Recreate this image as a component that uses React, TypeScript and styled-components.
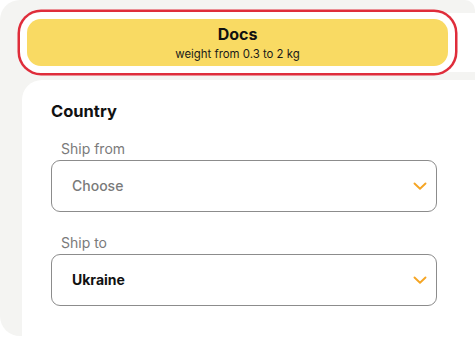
import React from 'react'
import styled, { createGlobalStyle } from 'styled-components'

const GlobalStyle = createGlobalStyle`
  html, body {
    margin: 0;
    padding: 0;
    background: #ffffff;
    overflow: hidden;
  }
  body {
    font-family: Inter, "Noto Sans", "Liberation Sans", sans-serif;
    color: #111111;
  }
`

type Field = { label: string; value: string | null }

const fields: Field[] = [
  { label: 'Ship from', value: null },
  { label: 'Ship to', value: 'Ukraine' },
]

const Chevron = () => (
  <svg width="14" height="9" viewBox="0 0 14 9" fill="none">
    <path d="M1.5 1.5L7 6.8L12.5 1.5" stroke="#f5a524" strokeWidth="1.9" strokeLinecap="round" strokeLinejoin="round" />
  </svg>
)

export default function App() {
  return (
    <>
      <GlobalStyle />
      <Panel>
        <TypeCard>
          <TypeOption>
            <OptionTitle>Docs</OptionTitle>
            <OptionHint>weight from 0.3 to 2 kg</OptionHint>
          </TypeOption>
        </TypeCard>

        <FormCard>
          <SectionTitle>Country</SectionTitle>
          {fields.map((field) => (
            <FieldGroup key={field.label}>
              <FieldLabel>{field.label}</FieldLabel>
              <SelectBox>
                <SelectValue filled={field.value != null}>{field.value ?? 'Choose'}</SelectValue>
                <Chevron />
              </SelectBox>
            </FieldGroup>
          ))}
        </FormCard>
      </Panel>
    </>
  )
}

const Panel = styled.div`
  display: flex;
  flex-direction: column;
  gap: 8px;
  width: 475px;
  height: 336px;
  box-sizing: border-box;
  padding: 13px 0 0 22px;
  background: #f4f4f2;
  border-radius: 20px 10px 0 20px;
  overflow: hidden;
`

const TypeCard = styled.div`
  display: flex;
  align-items: center;
  width: 480px;
  height: 59px;
  box-sizing: border-box;
  padding: 0 0 0 5px;
  background: #ffffff;
  border-radius: 16px 0 0 16px;
  flex-shrink: 0;
`

const TypeOption = styled.div`
  display: flex;
  flex-direction: column;
  align-items: center;
  justify-content: center;
  gap: 3px;
  width: 421px;
  height: 47px;
  background: #f9da63;
  border-radius: 14px;
  box-shadow: 0 0 0 7px #ffffff, 0 0 0 9.5px #df2d3b;
`

const OptionTitle = styled.div`
  font-size: 16px;
  line-height: 20px;
  font-weight: 700;
  color: #111111;
`

const OptionHint = styled.div`
  font-size: 11.4px;
  line-height: 14px;
  color: #1a1a1a;
`

const FormCard = styled.div`
  flex: 1;
  width: 480px;
  box-sizing: border-box;
  padding: 21px 0 0 29px;
  background: #ffffff;
  border-radius: 20px 0 0 0;
`

const SectionTitle = styled.div`
  font-size: 16.5px;
  line-height: 20px;
  font-weight: 700;
  color: #111111;
  margin-bottom: 19px;
`

const FieldGroup = styled.div`
  display: flex;
  flex-direction: column;
  gap: 2px;
  margin-bottom: 22px;
`

const FieldLabel = styled.div`
  padding-left: 10px;
  font-size: 14px;
  line-height: 18px;
  color: #7a7a7a;
`

const SelectBox = styled.div`
  display: flex;
  align-items: center;
  justify-content: space-between;
  width: 386px;
  height: 52px;
  box-sizing: border-box;
  padding: 0 9px 0 20px;
  border: 1px solid #8c8c8c;
  border-radius: 9px;
  background: #ffffff;
`

const SelectValue = styled.span<{ filled: boolean }>`
  font-size: 14px;
  line-height: 18px;
  font-weight: ${(props) => (props.filled ? 700 : 500)};
  color: ${(props) => (props.filled ? '#111111' : '#7a7a7a')};
`
